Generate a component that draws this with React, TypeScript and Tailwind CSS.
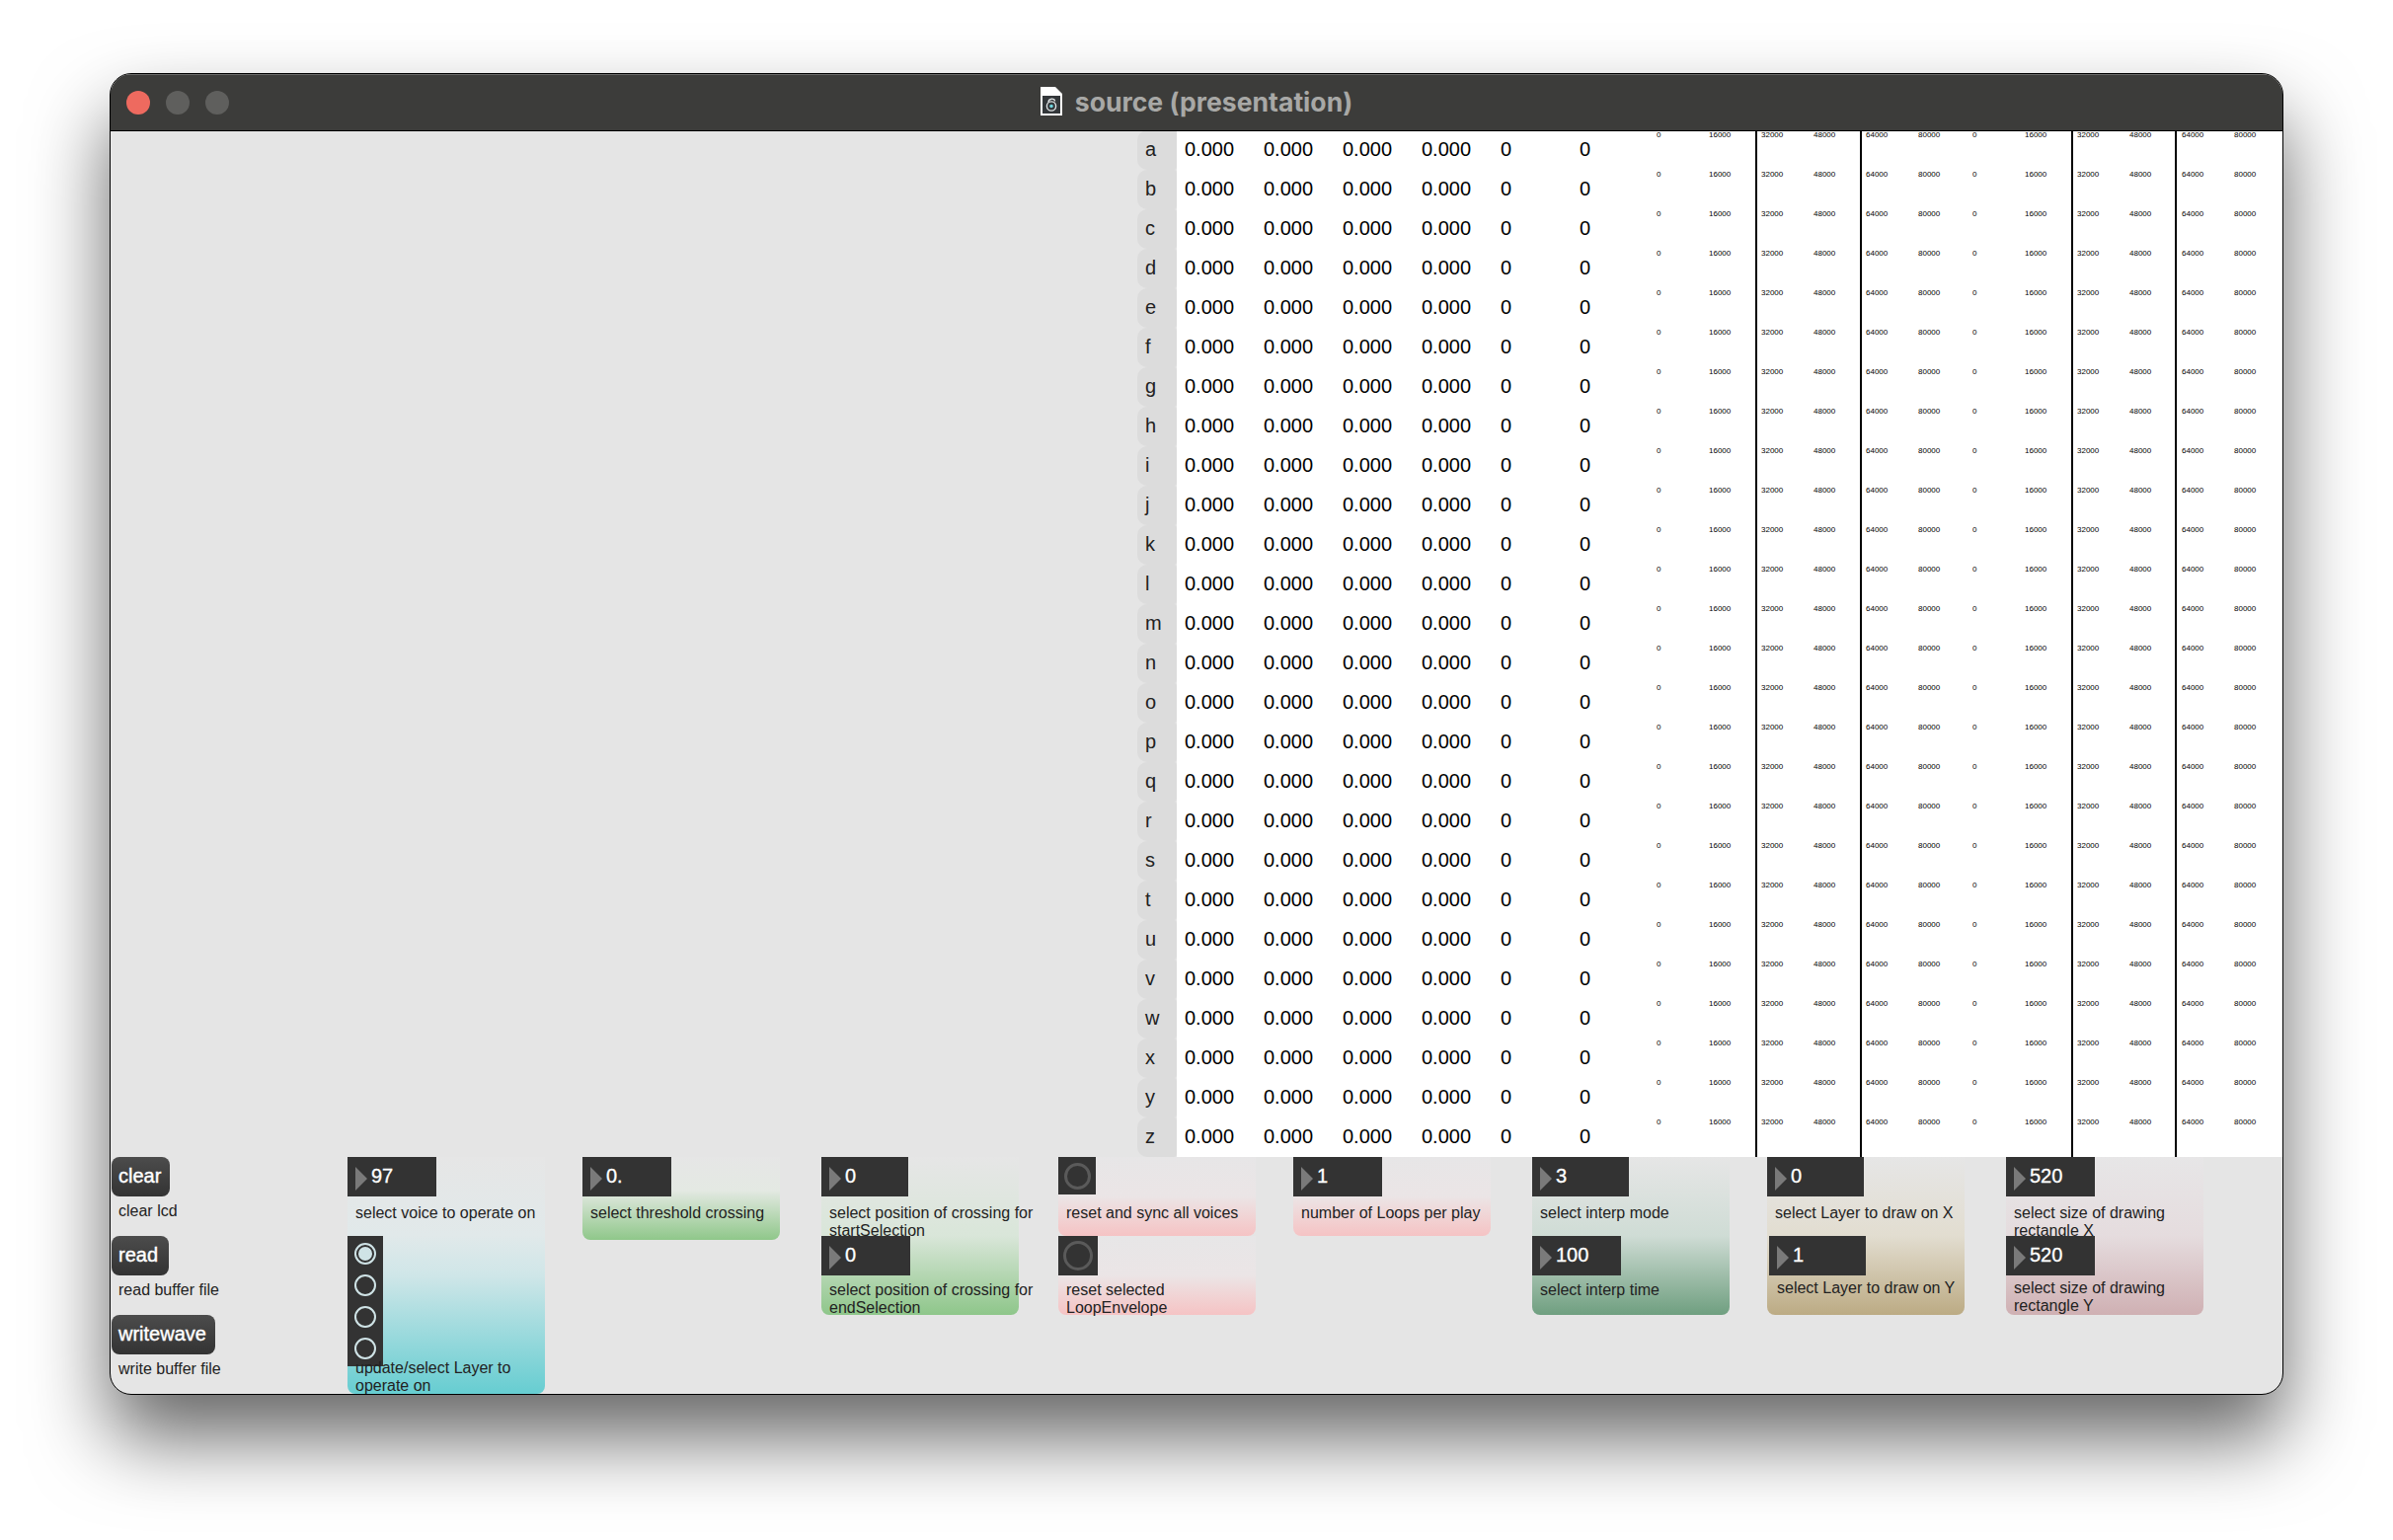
const letters = "abcdefghijklmnopqrstuvwxyz".split("");
const values = ["0.000", "0.000", "0.000", "0.000", "0", "0"];

// one tick group of the small rulers on the right
const Ticks = ({ a, b, className }: { a: string; b: string; className: string }) => (
  <div className={`flex h-full shrink-0 text-[8px] leading-[10px] text-black ${className}`}>
    <span className="w-[53px] shrink-0">{a}</span>
    <span>{b}</span>
  </div>
);

const Row = ({ letter }: { letter: string }) => (
  <div className="flex h-10">
    <div className="w-10 shrink-0 rounded-l-[10px] rounded-r-[3px] bg-[#dcdcdc] pl-2 text-[20px] leading-[38px] text-[#222]">
      {letter}
    </div>
    <div className="flex flex-1 bg-white">
      {values.map((v, i) => (
        <div key={i} className="w-20 shrink-0 pl-2 text-[20px] leading-[38px] text-black">
          {v}
        </div>
      ))}
      <Ticks a="0" b="16000" className="w-[106px] pl-[6px]" />
      <Ticks a="32000" b="48000" className="w-[106px] border-l-2 border-black pl-[4px]" />
      <Ticks a="64000" b="80000" className="w-[108px] border-l-2 border-black pl-[4px]" />
      <Ticks a="0" b="16000" className="w-[106px] pl-[6px]" />
      <Ticks a="32000" b="48000" className="w-[105px] border-l-2 border-black pl-[4px]" />
      <Ticks a="64000" b="80000" className="w-[108px] border-l-2 border-black pl-[5px]" />
    </div>
  </div>
);

const NumBox = ({ value, className }: { value: string; className: string }) => (
  <div className={`flex h-10 shrink-0 items-center bg-[#333] pl-2 ${className}`}>
    <svg width="13" height="24" viewBox="0 0 13 24" className="mt-1 shrink-0">
      <path d="M0 0 L12 12 L0 24 Z" fill="#7a7a7a" />
    </svg>
    <span className="ml-[3px] mb-[2px] text-[20px] leading-[36px] text-white [-webkit-text-stroke:0.3px_white]">
      {value}
    </span>
  </div>
);

const Label = ({ children, className }: { children: React.ReactNode; className: string }) => (
  <div className={`px-2 text-[16px] leading-[18px] text-[#222] ${className}`}>{children}</div>
);

const Slot = ({ children, className = "" }: { children: React.ReactNode; className?: string }) => (
  <div className={`h-20 overflow-hidden ${className}`}>{children}</div>
);

const ResetButton = ({ className, ring }: { className: string; ring: string }) => (
  <div className={`flex items-center justify-center bg-[#333] ${className}`}>
    <div className={`rounded-full border-[3px] border-[#5a5a5a] ${ring}`} />
  </div>
);

const MsgButton = ({ text, sub, className }: { text: string; sub: string; className: string }) => (
  <div className="h-20">
    <div
      className={`ml-px flex h-10 items-center rounded-lg bg-linear-to-b from-[#4c4c4c] to-[#333] pb-[2px] pl-[7px] text-[20px] text-white [-webkit-text-stroke:0.4px_white] ${className}`}
    >
      {text}
    </div>
    <div className="mt-[6px] pl-2 text-[16px] leading-[18px] text-[#222]">{sub}</div>
  </div>
);

const Radio = ({ on }: { on?: boolean }) => (
  <div className="flex h-8 items-center justify-center">
    <div className="flex size-[22px] items-center justify-center rounded-full border-2 border-[#cfe3e6]">
      {on && <div className="size-[14px] rounded-full bg-[#cfe3e6]" />}
    </div>
  </div>
);

const App = () => {
  return (
    <div className="h-[1560px] w-[2424px] overflow-hidden bg-white pl-[111px] pt-[74px] font-['Liberation_Sans',Arial,sans-serif]">
      <div className="h-[1339px] w-[2202px] overflow-hidden rounded-[22px] border border-black bg-[#e5e5e5] shadow-[0_44px_80px_rgba(0,0,0,0.6)]">
        {/* title bar */}
        <div className="relative z-10 flex h-[57px] items-center justify-center bg-[#3c3c3a] shadow-[inset_0_1px_0_#6a6a68,0_1px_0_#000]">
          <svg width="23" height="30" viewBox="0 0 23 30" className="mr-3 mt-[-2px]">
            <path d="M0 0 H15 L22 7 V29 H0 Z" fill="#fff" />
            <rect x="2" y="9" width="18" height="18" fill="#33373a" />
            <circle cx="11" cy="19.5" r="4.6" fill="none" stroke="#dfe3e4" strokeWidth="1.4" />
            <path d="M8 15.5 C8 11.5 14.5 11 14.5 14.5" fill="none" stroke="#dfe3e4" strokeWidth="1.4" />
            <circle cx="11" cy="19.5" r="1.8" fill="#6fd3dd" />
          </svg>
          <span className="font-['Inter',sans-serif] text-[26.6px] font-bold leading-none text-[#a8a8a6]">
            source (presentation)
          </span>
        </div>
        <div className="absolute left-[128px] top-[92px] z-20 flex gap-4">
          <div className="size-6 rounded-full bg-[#ee6a5f]" />
          <div className="size-6 rounded-full bg-[#5f5f5d]" />
          <div className="size-6 rounded-full bg-[#5f5f5d]" />
        </div>

        {/* table */}
        <div className="ml-[1040px] h-[1040px]">
          {letters.map((l) => (
            <Row key={l} letter={l} />
          ))}
        </div>

        {/* controls */}
        <div className="flex h-[240px] overflow-hidden">
          <div className="w-[240px] shrink-0">
            <MsgButton text="clear" sub="clear lcd" className="w-[59px]" />
            <MsgButton text="read" sub="read buffer file" className="w-[58px]" />
            <MsgButton text="writewave" sub="write buffer file" className="w-[105px]" />
          </div>

          <div className="h-[240px] w-[200px] shrink-0 rounded-b-lg bg-[linear-gradient(#e6e6e6,#e1e9ea_33%,#cfe6e8_50%,#66cdd1)]">
            <Slot>
              <NumBox value="97" className="w-[90px]" />
              <Label className="mt-2">select voice to operate on</Label>
            </Slot>
            <div className="h-[132px] w-9 bg-[#333] py-[2px]">
              <Radio on />
              <Radio />
              <Radio />
              <Radio />
            </div>
            <Label className="mt-[-7px]">update/select Layer to operate on</Label>
          </div>

          <div className="ml-[38px] h-[84px] w-[200px] shrink-0 rounded-b-lg bg-linear-to-b from-[#e6e6e6] via-[#e4e9e3] via-40% to-[#8fc78a]">
            <NumBox value="0." className="w-[90px]" />
            <Label className="mt-2">select threshold crossing</Label>
          </div>

          <div className="ml-[42px] h-40 w-[200px] shrink-0 rounded-b-lg bg-linear-to-b from-[#e6e6e6] via-[#d9e6d9] via-50% to-[#8ec68a]">
            <Slot className="w-[240px]">
              <NumBox value="0" className="w-[88px]" />
              <Label className="mt-2 w-[226px]">select position of crossing for startSelection</Label>
            </Slot>
            <NumBox value="0" className="w-[90px]" />
            <Label className="mt-[6px] w-[226px]">select position of crossing for endSelection</Label>
          </div>

          <div className="ml-[40px] w-[200px] shrink-0">
            <div className="h-20 rounded-b-lg bg-linear-to-b from-[#e7e6e7] via-[#ebe5e6] via-50% to-[#f5c3c4]">
              <ResetButton className="h-[38px] w-[38px]" ring="size-[27px]" />
              <Label className="mt-[10px]">reset and sync all voices</Label>
            </div>
            <div className="h-20 rounded-b-lg bg-linear-to-b from-[#e7e6e7] via-[#ebe5e6] via-50% to-[#f5c3c4]">
              <ResetButton className="h-10 w-10" ring="size-[30px]" />
              <Label className="mt-[6px]">reset selected LoopEnvelope</Label>
            </div>
          </div>

          <div className="ml-[38px] h-20 w-[200px] shrink-0 rounded-b-lg bg-linear-to-b from-[#e7e6e7] via-[#ebe5e6] via-50% to-[#f5c3c4]">
            <NumBox value="1" className="w-[90px]" />
            <Label className="mt-2">number of Loops per play</Label>
          </div>

          <div className="ml-[42px] h-40 w-[200px] shrink-0 rounded-b-lg bg-linear-to-b from-[#e6e6e6] via-[#cfdcd5] via-50% to-[#6f9f80]">
            <Slot>
              <NumBox value="3" className="w-[98px]" />
              <Label className="mt-2">select interp mode</Label>
            </Slot>
            <NumBox value="100" className="w-[90px]" />
            <Label className="mt-[6px]">select interp time</Label>
          </div>

          <div className="ml-[38px] h-40 w-[200px] shrink-0 rounded-b-lg bg-linear-to-b from-[#e6e6e6] via-[#e2ddd0] via-50% to-[#bcab84]">
            <Slot>
              <NumBox value="0" className="w-[98px]" />
              <Label className="mt-2">select Layer to draw on X</Label>
            </Slot>
            <NumBox value="1" className="ml-[2px] w-[98px]" />
            <Label className="ml-[2px] mt-1">select Layer to draw on Y</Label>
          </div>

          <div className="ml-[42px] h-40 w-[200px] shrink-0 rounded-b-lg bg-linear-to-b from-[#e7e6e7] via-[#e5dcde] via-50% to-[#cfb0b3]">
            <Slot>
              <NumBox value="520" className="w-[90px]" />
              <Label className="mt-2">select size of drawing rectangle X</Label>
            </Slot>
            <NumBox value="520" className="w-[90px]" />
            <Label className="mt-1">select size of drawing rectangle Y</Label>
          </div>
        </div>
      </div>
    </div>
  );
};

export default App;
